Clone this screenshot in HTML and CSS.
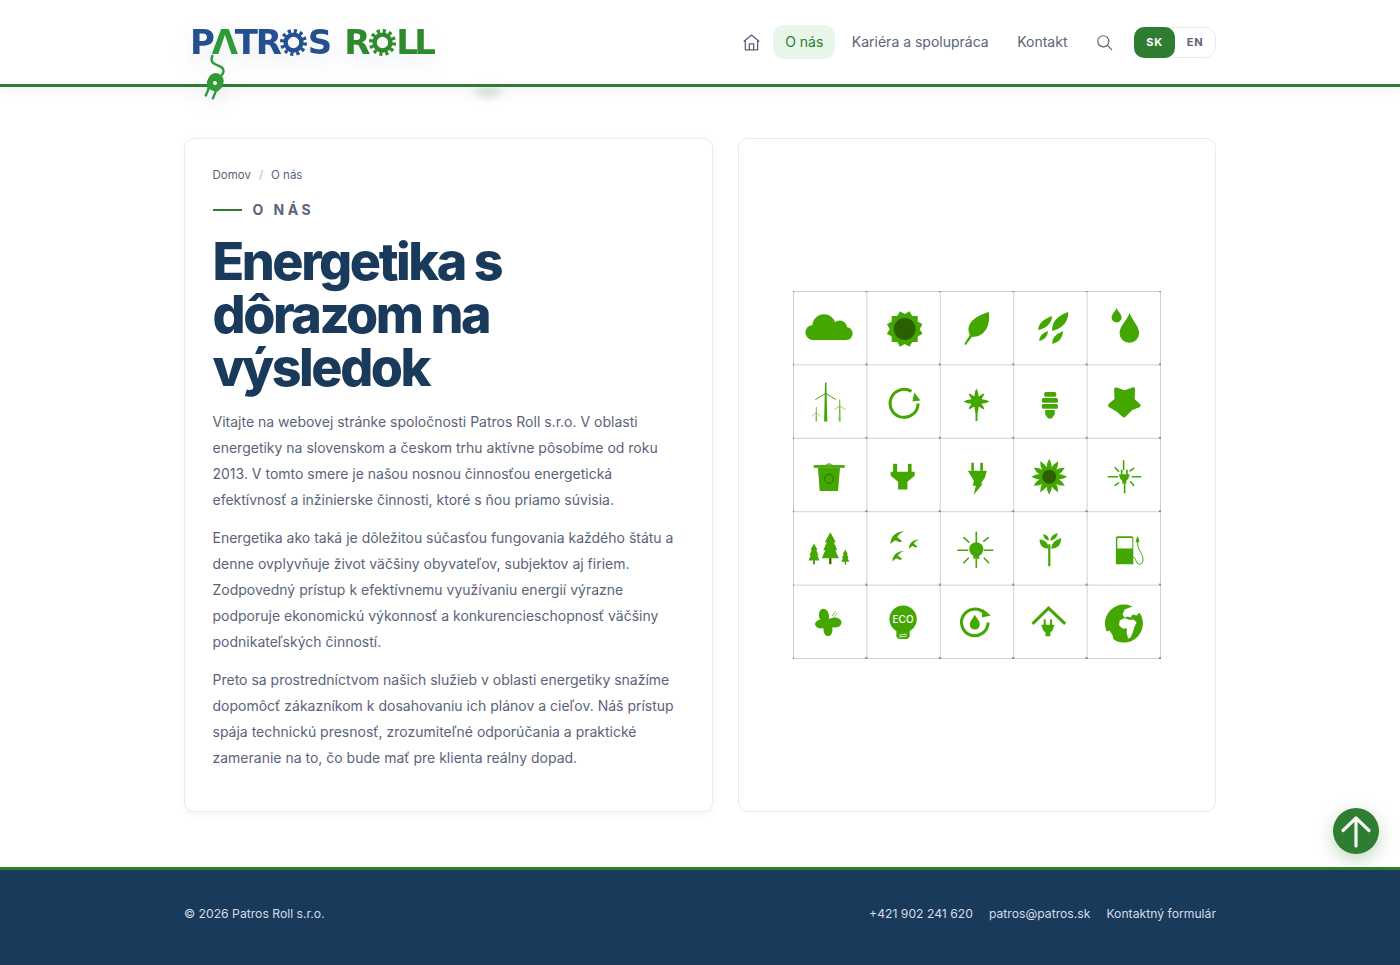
FILE: index.html
```html
<!DOCTYPE html>
<html lang="sk">
<head>
  <meta charset="UTF-8">
  <meta name="viewport" content="width=device-width, initial-scale=1.0">
  <title>O nás - Patros Roll</title>
  <link rel="stylesheet" href="styles.css">
</head>
<body>
  <header class="site-header">
    <div class="wrap header-row">
      <a class="logo" href="#">
        <span class="logo-blue">P</span><span class="logo-a">Λ</span><span class="logo-blue">TR</span>
        <svg class="gear gear-blue" viewBox="0 0 28 28" role="img" aria-label="O"><circle cx="14" cy="14" r="12" class="teeth"/><circle cx="14" cy="14" r="8.2" class="ring"/></svg>
        <span class="logo-blue">S</span>
        <span class="logo-green logo-second">R</span>
        <svg class="gear gear-green" viewBox="0 0 28 28" role="img" aria-label="O"><circle cx="14" cy="14" r="12" class="teeth"/><circle cx="14" cy="14" r="8.2" class="ring"/></svg>
        <span class="logo-green logo-ll">LL</span>
        <!-- kabel so zastrckou ide cez ciaru hlavicky -->
        <svg class="plug" viewBox="0 0 40 56" aria-hidden="true">
          <path class="plug-wire" d="M12.7 0 C10 6 12 8 18 10.5 C25 13 25 17 20 22"/>
          <g transform="translate(15 28) rotate(22)">
            <path class="plug-body" d="M-8 -2 A8 8 0 0 1 8 -2 V2 L5 8 H-5 L-8 2Z"/>
            <rect class="plug-body" x="-5" y="7" width="2.4" height="9"/>
            <rect class="plug-body" x="2.6" y="7" width="2.4" height="9"/>
            <circle class="plug-hole" cx="0" cy="0" r="2"/>
          </g>
        </svg>
      </a>
      <nav class="main-nav">
        <a class="nav-home" href="#" aria-label="Domov">
          <svg viewBox="0 0 24 24"><path d="M3.5 10.5 12 3.5l8.5 7M5 9.5V20.5h14V9.5M9.5 20.5v-7h5v7"/></svg>
        </a>
        <a class="nav-link active" href="#">O nás</a>
        <a class="nav-link" href="#">Kariéra a spolupráca</a>
        <a class="nav-link" href="#">Kontakt</a>
        <a class="nav-search" href="#" aria-label="Hľadať">
          <svg viewBox="0 0 24 24"><circle cx="10.5" cy="10.5" r="7"/><path d="m16 16 5 5"/></svg>
        </a>
        <div class="lang">
          <span class="lang-item on">SK</span>
          <span class="lang-item">EN</span>
        </div>
      </nav>
    </div>
    <div class="smudge"></div>
  </header>

  <main class="wrap content">
    <section class="card text-card">
      <div class="crumbs"><a href="#">Domov</a><span class="sep">/</span><span>O nás</span></div>
      <div class="eyebrow"><span class="eyebrow-line"></span>O NÁS</div>
      <h1>Energetika s dôrazom na výsledok</h1>
      <p>Vitajte na webovej stránke spoločnosti Patros Roll s.r.o. V oblasti energetiky na slovenskom a českom trhu aktívne pôsobíme od roku 2013. V tomto smere je našou nosnou činnosťou energetická efektívnosť a inžinierske činnosti, ktoré s ňou priamo súvisia.</p>
      <p>Energetika ako taká je dôležitou súčasťou fungovania každého štátu a denne ovplyvňuje život väčšiny obyvateľov, subjektov aj firiem. Zodpovedný prístup k efektívnemu využívaniu energií výrazne podporuje ekonomickú výkonnosť a konkurencieschopnosť väčšiny podnikateľských činností.</p>
      <p>Preto sa prostredníctvom našich služieb v oblasti energetiky snažíme dopomôcť zákazníkom k dosahovaniu ich plánov a cieľov. Náš prístup spája technickú presnosť, zrozumiteľné odporúčania a praktické zameranie na to, čo bude mať pre klienta reálny dopad.</p>
    </section>

    <section class="card image-card">
      <svg class="eco-grid" viewBox="0 0 368 368" aria-hidden="true">
        <defs>
          <pattern id="tile" width="73.4" height="73.4" patternUnits="userSpaceOnUse">
            <path class="tile-line" d="M0 0V73.4M0 0H73.4"/>
            <circle class="tile-dot" cx="0" cy="0" r="1.1"/>
            <circle class="tile-dot" cx="73.4" cy="0" r="1.1"/>
            <circle class="tile-dot" cx="0" cy="73.4" r="1.1"/>
            <circle class="tile-dot" cx="73.4" cy="73.4" r="1.1"/>
          </pattern>
          <path id="petal" d="M0 -18 Q5.5 -9 0 0 Q5.5 9 0 18 Q-5.5 9 0 0 Q-5.5 -9 0 -18Z"/>
          <g id="tree">
            <rect class="ic-dark" x="-1.1" y="24" width="2.2" height="8"/>
            <path d="M0 0 5.5 10H3.5L7 18H5L8.5 26H-8.5L-5 18H-7L-3.5 10H-5.5Z"/>
          </g>
          <path id="bird" d="M0 12 C0 4 6 -1 14 -1 C9 1 7 4 7 5 L12 9 L9 10 L5 8 C3 9 1 11 0 12Z"/>
          <g id="miniplug">
            <rect x="-3.5" y="-6" width="1.7" height="5"/>
            <rect x="1.8" y="-6" width="1.7" height="5"/>
            <path d="M-5.5 -1.5H5.5L4 3 2 5V8H-2V5L-4 3Z"/>
          </g>
        </defs>
        <rect class="tile-fill" x="0" y="0" width="368" height="368"/>

        <g class="ic">
          <!-- rad 1 -->
          <g>
            <circle cx="31" cy="35" r="11.7"/><circle cx="46.7" cy="37" r="7.5"/>
            <circle cx="20" cy="41.5" r="7.6"/><circle cx="53" cy="42.5" r="6.6"/>
            <rect x="20" y="38" width="33" height="11.1"/>
          </g>
          <g transform="translate(111.7 38)">
            <rect x="-13" y="-13" width="26" height="26"/>
            <rect x="-13" y="-13" width="26" height="26" transform="rotate(30)"/>
            <rect x="-13" y="-13" width="26" height="26" transform="rotate(60)"/>
            <circle class="ic-dark" r="11"/>
          </g>
          <g transform="translate(146.8 0)">
            <path d="M49 21 C51 35 45 46 32 46 L26 54 L24.5 53 L30 44 C25 32 36 25 49 21Z"/>
          </g>
          <g transform="translate(220.2 0)">
            <path d="M39 40 Q38 27 55 21 Q55 36 39 40Z"/>
            <path d="M25 39 Q25 30 39 25 Q38 36 25 39Z"/>
            <path d="M26 50 Q26 43 35 40 Q34 48 26 50Z"/>
            <path d="M39 53 Q38 45 50 40 Q49 51 39 53Z"/>
          </g>
          <g transform="translate(293.6 0)">
            <path d="M30 17 C31 20 35 23 35 26.5 A5 5 0 0 1 25 26.5 C25 23 29 20 30 17Z"/>
            <path d="M43 22 C46 30 52.5 35 52.5 42 A9.7 9.7 0 0 1 33 42 C33 35 40 30 43 22Z"/>
          </g>

          <!-- rad 2 -->
          <g transform="translate(0 73.4)">
            <path d="M32 18H33.4L34.3 57H31.1Z"/>
            <path class="ic-line thin" d="M32.7 29 22.7 35M32.7 29 42.7 35"/>
            <g class="ic-soft">
              <path d="M46.2 35H47.2L47.7 57H45.7Z"/>
              <path class="ic-line hair" d="M46.7 41.7 41.7 45M46.7 41.7 52.7 45"/>
              <path d="M22.9 42.7H23.7L24.1 57H22.5Z"/>
              <path class="ic-line hair" d="M23.3 48 19.3 51.7M23.3 48 27.3 51.7"/>
            </g>
          </g>
          <g transform="translate(73.4 73.4)">
            <path class="ic-line ring" d="M45 27 A14 14 0 1 0 51.7 39"/>
            <path d="M48 28 54 36 46 37Z"/>
          </g>
          <g transform="translate(183.5 110.5)">
            <use href="#petal" transform="scale(.72)"/>
            <use href="#petal" transform="rotate(45) scale(.62)"/>
            <use href="#petal" transform="rotate(90) scale(.72)"/>
            <use href="#petal" transform="rotate(135) scale(.62)"/>
            <circle r="6"/>
            <rect x="-1" y="0" width="2" height="19.5"/>
          </g>
          <g transform="translate(220.2 73.4)">
            <rect x="31" y="27.7" width="12" height="4.6" rx="1.5"/>
            <rect x="28.7" y="33.7" width="16" height="4.6" rx="1.5"/>
            <rect x="28.7" y="39.7" width="16" height="4.6" rx="1.5"/>
            <path d="M32 45.5H41.5V50L38.5 54H35L32 50Z"/>
          </g>
          <g transform="translate(293.6 73.4)">
            <path class="blob" d="M29.5 25 38 28 46.5 25 46 35.5 52 41 44.5 44 37.5 51 30.5 45 23.5 41 30 35.5Z"/>
          </g>

          <!-- rad 3 -->
          <g transform="translate(0 146.8)">
            <path d="M20.7 27.3H51.7V30H20.7Z"/>
            <path d="M32 27 Q36 24 40 27Z"/>
            <path d="M25 30H47L45 53.3H26.7Z"/>
            <circle class="ic-outline" cx="36" cy="41" r="4.5"/>
          </g>
          <g transform="translate(73.4 146.8)">
            <rect x="26.7" y="26" width="4" height="9"/>
            <rect x="41.5" y="26" width="3.7" height="9"/>
            <path d="M24.3 34H48.3V38L41 44V51.7H31.7V44L24.3 38Z"/>
          </g>
          <g transform="translate(146.8 146.8)">
            <rect x="31.5" y="25" width="2.6" height="8"/>
            <rect x="40.5" y="25" width="2.6" height="8"/>
            <path d="M28 33H47L45 40 41 46 43 46 34 57 36 48 33 48 34 43Z"/>
          </g>
          <g transform="translate(256.2 185.8)">
            <use href="#petal"/>
            <use href="#petal" transform="rotate(30)"/>
            <use href="#petal" transform="rotate(60)"/>
            <use href="#petal" transform="rotate(90)"/>
            <use href="#petal" transform="rotate(120)"/>
            <use href="#petal" transform="rotate(150)"/>
            <circle r="9"/>
            <circle class="ic-dark" r="7"/>
          </g>
          <g transform="translate(293.6 146.8)">
            <path class="ic-line ray" d="M37 23V31.7M38 46.7V55M21.7 39H31M45.7 39H54M28.5 30 32 33.5M47 30.5 43.5 33M28.5 47.5 32 45M47 47.5 44 44"/>
            <use href="#miniplug" x="37.7" y="38"/>
          </g>

          <!-- rad 4 -->
          <g transform="translate(0 220.2)">
            <use href="#tree" transform="translate(37.3 21)"/>
            <use href="#tree" transform="translate(21 32.3) scale(.65)"/>
            <use href="#tree" transform="translate(52.3 38.3) scale(.47)"/>
          </g>
          <g transform="translate(73.4 220.2)">
            <use href="#bird" transform="translate(24 21)"/>
            <use href="#bird" transform="translate(42.5 29) scale(.72)"/>
            <use href="#bird" transform="translate(26 40.5) scale(.82)"/>
          </g>
          <g transform="translate(146.8 220.2)">
            <path class="ic-line ray" d="M18 39H28M44.5 39H53M36.5 21V31M36.5 48V56M24 26.5 29 31M48.5 26.5 44 30M24 51.5 28.5 47M49 51.5 44.5 47"/>
            <circle cx="36.5" cy="38" r="7"/>
            <path d="M33.5 43H39.5V47.5H33.5Z"/>
          </g>
          <g transform="translate(220.2 220.2)">
            <rect x="35" y="33" width="2.2" height="22"/>
            <path d="M30 22.7 Q36 24 35.5 29.5 Q30 28 30 22.7Z"/>
            <path d="M44.5 21.7 Q44 28 37 29.5 Q37 24 44.5 21.7Z"/>
            <path d="M26.3 28 Q35.5 29 35.3 37.5 Q26 37 26.3 28Z"/>
            <path d="M48 26.7 Q48 37 38 37.5 Q37.5 30 48 26.7Z"/>
          </g>
          <g transform="translate(293.6 220.2)">
            <path d="M31 25H45A1.7 1.7 0 0 1 46.7 26.7V53H29.3V26.7A1.7 1.7 0 0 1 31 25ZM31.5 26.7A1 1 0 0 0 30.7 27.7V37.3H45.7V27.7A1 1 0 0 0 44.9 26.7Z" fill-rule="evenodd"/>
            <path class="ic-line hose" d="M46.7 46C50 46 48.5 53 53 53 58 53 56.5 44 54 41 52 38.5 51 35 51 30"/>
            <path d="M51 25 C52 27 53 29 52.5 31 L49.5 31 C49 29 50 27 51 25Z"/>
          </g>

          <!-- rad 5 -->
          <g transform="translate(0 293.6)">
            <ellipse cx="31" cy="31" rx="5" ry="7" transform="rotate(-12 31 31)"/>
            <ellipse cx="41.5" cy="38" rx="7" ry="5"/>
            <ellipse cx="35" cy="45" rx="4.5" ry="6.5"/>
            <ellipse cx="28.5" cy="39.5" rx="6.5" ry="4.5"/>
            <circle cx="35" cy="38" r="4"/>
            <path class="ic-line hair" d="M39.5 31 42 27M41.5 32 44 28.5"/>
          </g>
          <g transform="translate(73.4 293.6)">
            <circle cx="36.7" cy="34.5" r="13.7"/>
            <path d="M30 44H43.3V52L41 54.5H32L30 52Z"/>
            <text class="eco-text" x="36.7" y="38">ECO</text>
            <path class="ic-line white" d="M33 50.5 40 49.5M33 52.5 40 51.5"/>
          </g>
          <g transform="translate(146.8 293.6)">
            <path class="ic-line ring" d="M44.5 28.5 A13.3 13.3 0 1 0 48.3 38"/>
            <path d="M43 24.5 51 31 42 33Z"/>
            <path d="M35 30 C36 33 40 36 40 40 A5 5 0 0 1 30 40 C30 36 34 33 35 30Z"/>
          </g>
          <g transform="translate(220.2 293.6)">
            <path class="ic-line roof" d="M19.3 39.3 35.3 23.5 52 39.3"/>
            <use href="#miniplug" transform="translate(34.7 42) scale(1.2)"/>
          </g>
          <g transform="translate(293.6 293.6)">
            <circle cx="37.3" cy="39" r="19"/>
            <path class="land" d="M38 25 L47 21.5 L53 28 L50 31 L46 30 L44 33 L41 32 L38 33 L36 30Z"/>
            <path class="land" d="M33 36 L38 33.5 L43 35.5 L47 35 L50 38 L48 42 L46.5 47 L44 53 L41.5 54 L40 48 L40.5 44 L36 44 L32.5 41Z"/>
            <path class="land" d="M18 48 L23 46 L26 51 L27 56 L26 60 L20 56Z"/>
          </g>
        </g>
      </svg>
    </section>
  </main>

  <footer class="site-footer">
    <div class="wrap footer-row">
      <span>© 2026 Patros Roll s.r.o.</span>
      <div class="footer-links">
        <a href="#">+421 902 241 620</a>
        <a href="#">patros@patros.sk</a>
        <a href="#">Kontaktný formulár</a>
      </div>
    </div>
  </footer>

  <a class="to-top" href="#" aria-label="Hore">
    <svg viewBox="0 0 46 46"><path d="M23 38V10M10 22.5 23 10 36 22.5"/></svg>
  </a>
</body>
</html>
```

FILE: styles.css
```css
:root {
  --green: #2e7d32;
  --navy: #1a3a5c;
  --text: #5a6478;
  --border: #e8ecef;
  --icon: #44a600;
  --icon-dark: #2a6000;
}

* {
  box-sizing: border-box;
}

body {
  margin: 0;
  height: 965px;
  display: flex;
  flex-direction: column;
  background: #fff;
  color: var(--text);
  font-family: "Inter", "Liberation Sans", sans-serif;
  overflow: hidden;
}

a {
  color: inherit;
  text-decoration: none;
}

.wrap {
  width: 1032px;
  margin: 0 auto;
}

/* Header */
.site-header {
  position: relative;
  height: 87px;
  border-bottom: 3px solid var(--green);
  box-shadow: 0 4px 18px rgba(0, 0, 0, 0.05);
  flex-shrink: 0;
}

.header-row {
  height: 84px;
  display: flex;
  align-items: center;
  justify-content: space-between;
}

.logo {
  position: relative;
  display: flex;
  align-items: center;
  height: 30px;
  margin-left: 6px;
  font-family: "DejaVu Sans", sans-serif;
  font-size: 34px;
  font-weight: 700;
  letter-spacing: -2.2px;
  line-height: 1;
  filter: drop-shadow(0 8px 10px rgba(40, 70, 110, 0.1));
}

.logo-blue {
  color: #24508f;
}

.logo-green {
  color: #2f8a2e;
}

.logo-a {
  color: #2f9a38;
  margin: 0 -1px;
}

.logo-second {
  margin-left: 14px;
}

.logo-ll {
  letter-spacing: -3.6px;
}

.gear {
  width: 27px;
  height: 27px;
  margin: 0 0.5px;
  fill: none;
}

.gear .teeth {
  stroke-width: 4;
  stroke-dasharray: 3.2 3.08;
}

.gear .ring {
  stroke-width: 4.6;
}

.gear-blue circle {
  stroke: #24508f;
}

.gear-green circle {
  stroke: #2f8a2e;
}

.plug {
  position: absolute;
  left: 10px;
  top: 28px;
  width: 40px;
  height: 56px;
  overflow: visible;
}

.plug-wire {
  fill: none;
  stroke: #2f9a38;
  stroke-width: 2.4;
}

.plug-body {
  fill: #2f9a38;
}

.plug-hole {
  fill: #fff;
}

.main-nav {
  display: flex;
  align-items: center;
  font-size: 14px;
}

.nav-home {
  display: flex;
  margin-right: 11px;
}

.nav-home svg {
  width: 21px;
  height: 21px;
}

.nav-search svg {
  width: 19px;
  height: 19px;
}

.nav-home svg,
.nav-search svg {
  fill: none;
  stroke: #5a6478;
  stroke-width: 1.5;
  stroke-linecap: round;
  stroke-linejoin: round;
}

.nav-link {
  padding: 8px 12px;
  height: 34px;
  line-height: 18px;
  border-radius: 10px;
  margin-right: 4.5px;
}

.nav-link.active {
  background: #e8f5e9;
  color: var(--green);
}

.nav-search {
  display: flex;
  margin: 0 20px 0 11px;
}

.lang {
  display: flex;
  width: 82px;
  height: 31px;
  border: 1px solid var(--border);
  border-radius: 11px;
  font-size: 11px;
  font-weight: 700;
  letter-spacing: 0.8px;
}

.lang-item {
  flex: 1;
  display: flex;
  align-items: center;
  justify-content: center;
}

.lang-item.on {
  margin: -1px 0 -1px -1px;
  flex: 0 0 41px;
  background: var(--green);
  color: #fff;
  border-radius: 10px;
}

.smudge {
  position: absolute;
  left: 474px;
  top: 87px;
  width: 28px;
  height: 10px;
  background: rgba(46, 125, 50, 0.22);
  border-radius: 50%;
  filter: blur(4px);
}

/* Obsah */
.content {
  flex: 1;
  display: grid;
  grid-template-columns: 529px 478px;
  gap: 25px;
  padding: 51px 0 55px;
}

.card {
  border: 1px solid var(--border);
  border-radius: 10px;
  background: #fff;
}

.text-card {
  padding: 28px 27.5px;
  box-shadow: 0 2px 8px rgba(0, 0, 0, 0.05);
}

.image-card {
  display: flex;
  align-items: center;
  justify-content: center;
}

.crumbs {
  display: flex;
  gap: 8px;
  font-size: 11.5px;
  line-height: 16px;
  margin-bottom: 18px;
}

.crumbs .sep {
  color: #b4bac4;
}

.eyebrow {
  display: flex;
  align-items: center;
  gap: 11px;
  font-size: 14px;
  font-weight: 700;
  letter-spacing: 3.5px;
  line-height: 18px;
}

.eyebrow-line {
  width: 29px;
  height: 2px;
  background: var(--green);
}

h1 {
  margin: 16px 0 15.4px;
  color: var(--navy);
  font-size: 52px;
  font-weight: 800;
  letter-spacing: -2.45px;
  line-height: 53px;
  width: 340px;
}

.text-card p {
  margin: 0 0 12px;
  font-size: 14px;
  line-height: 26px;
}

/* Ikony */
.eco-grid {
  width: 368px;
  height: 368px;
}

.tile-fill {
  fill: url(#tile);
}

.tile-line {
  fill: none;
  stroke: #d2d2d2;
  stroke-width: 2;
}

.tile-dot {
  fill: #777;
}

.ic {
  fill: var(--icon);
}

.ic-dark {
  fill: var(--icon-dark);
}

.ic-soft {
  opacity: 0.75;
}

.ic-line {
  fill: none;
  stroke: var(--icon);
  stroke-linecap: round;
}

.ic-line.thin {
  stroke-width: 1;
}

.ic-line.hair {
  stroke-width: 0.7;
}

.ic-line.ring {
  stroke-width: 3;
  stroke-linecap: butt;
}

.ic-line.ray {
  stroke-width: 1.6;
}

.ic-line.hose {
  stroke-width: 1;
}

.ic-line.roof {
  stroke-width: 3;
  stroke-linecap: butt;
}

.ic-line.white {
  stroke: #fff;
  stroke-width: 0.8;
}

.ic-outline {
  fill: none;
  stroke: var(--icon-dark);
  stroke-width: 0.8;
}

.blob {
  stroke: var(--icon);
  stroke-width: 4;
  stroke-linejoin: round;
}

.land {
  fill: #fff;
}

.eco-text {
  fill: #fff;
  font-size: 10px;
  font-weight: 500;
  text-anchor: middle;
}

/* Footer */
.site-footer {
  height: 98px;
  flex-shrink: 0;
  border-top: 3px solid var(--green);
  background: var(--navy);
  color: #d3dce6;
  font-size: 12.2px;
}

.footer-row {
  height: 87px;
  display: flex;
  align-items: center;
  justify-content: space-between;
}

.footer-links {
  display: flex;
  gap: 16px;
}

.to-top {
  position: fixed;
  right: 21px;
  bottom: 111px;
  width: 46px;
  height: 46px;
  border-radius: 50%;
  background: var(--green);
  box-shadow: 0 6px 18px rgba(46, 125, 50, 0.3);
  display: flex;
}

.to-top svg {
  width: 46px;
  height: 46px;
  fill: none;
  stroke: #f4f8f4;
  stroke-width: 3.2;
  stroke-linecap: round;
  stroke-linejoin: round;
}
```
